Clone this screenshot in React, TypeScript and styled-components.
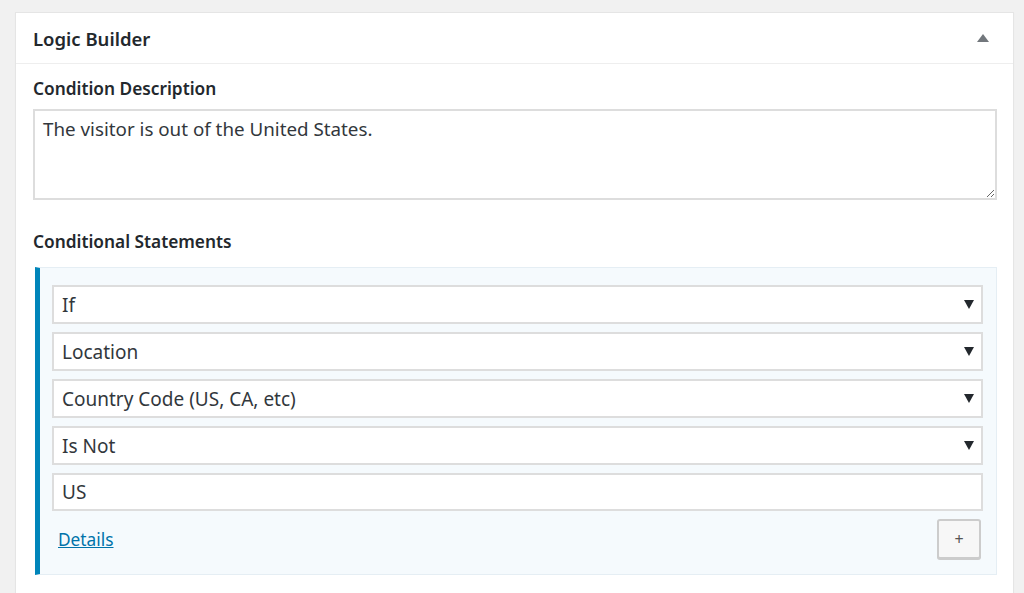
import styled, { createGlobalStyle } from 'styled-components';

const GlobalStyle = createGlobalStyle`
    html, body {
        margin: 0;
        padding: 0;
        background: #f1f1f1;
        font-family: "Noto Sans", "Open Sans", sans-serif;
        color: #23282d;
    }
`;

const Page = styled.div`
    padding: 12px 10px 0 15px;
    height: 593px;
    box-sizing: border-box;
    overflow: hidden;
`;

const Card = styled.div`
    background: #fff;
    border: 1px solid #e5e5e5;
    box-shadow: 0 1px 1px rgba(0, 0, 0, 0.04);
    min-height: 620px;
`;

const Header = styled.div`
    display: flex;
    align-items: center;
    justify-content: space-between;
    height: 50px;
    padding: 0 24px 0 17px;
    border-bottom: 1px solid #eee;
`;

const Title = styled.h2`
    margin: 0;
    font-size: 18.5px;
    font-weight: 600;
    color: #23282d;
`;

const Toggle = styled.span`
    width: 0;
    height: 0;
    border-left: 6px solid transparent;
    border-right: 6px solid transparent;
    border-bottom: 8px solid #72777c;
`;

const Body = styled.div`
    padding: 13px 16px 0 17px;
`;

const Label = styled.div<{ $gap?: number }>`
    font-size: 17.3px;
    font-weight: 600;
    color: #23282d;
    line-height: 24px;
    margin-bottom: ${({ $gap }) => $gap ?? 8}px;
`;

const TextArea = styled.textarea`
    display: block;
    width: 100%;
    height: 91px;
    box-sizing: border-box;
    border: 2px solid #ddd;
    padding: 5px 8px;
    font-family: "Noto Sans", "Open Sans", sans-serif;
    font-size: 18.8px;
    color: #32373c;
    resize: vertical;
    margin-bottom: 30px;
    outline: none;
`;

const Statement = styled.div`
    margin-left: 2px;
    background: #f5fafd;
    border: 1px solid #e5eef4;
    border-left: 5px solid #0085ba;
    padding: 17px 13px 15px 12px;
    display: flex;
    flex-direction: column;
    gap: 8px;
`;

const Field = styled.div<{ $input?: boolean }>`
    display: flex;
    align-items: center;
    justify-content: space-between;
    height: ${({ $input }) => ($input ? 38 : 39)}px;
    box-sizing: border-box;
    background: #fff;
    border: 2px solid #ddd;
    padding: 0 7px 0 8px;
    font-size: 19px;
    color: #32373c;
`;

const Arrow = styled.span`
    width: 0;
    height: 0;
    border-left: 5px solid transparent;
    border-right: 5px solid transparent;
    border-top: 9px solid #23282d;
`;

const Footer = styled.div`
    display: flex;
    align-items: center;
    justify-content: space-between;
    padding: 0 2px 0 6px;
`;

const DetailsLink = styled.a`
    color: #0073aa;
    text-decoration: underline;
    font-size: 17.3px;
`;

const AddButton = styled.button`
    width: 44px;
    height: 40px;
    border: 2px solid #ccc;
    border-radius: 3px;
    background: #f7f7f7;
    box-shadow: 0 1px 0 #ccc;
    font-size: 16px;
    color: #555;
    font-family: "Noto Sans", sans-serif;
`;

const selects = ['If', 'Location', 'Country Code (US, CA, etc)', 'Is Not'];

export default function App() {
    return (
        <Page>
            <GlobalStyle />
            <Card>
                <Header>
                    <Title>Logic Builder</Title>
                    <Toggle />
                </Header>
                <Body>
                    <Label>Condition Description</Label>
                    <TextArea defaultValue="The visitor is out of the United States." />
                    <Label $gap={13}>Conditional Statements</Label>
                    <Statement>
                        {selects.map((s) => (
                            <Field key={s}>
                                {s}
                                <Arrow />
                            </Field>
                        ))}
                        <Field $input>US</Field>
                        <Footer>
                            <DetailsLink href="#">Details</DetailsLink>
                            <AddButton>+</AddButton>
                        </Footer>
                    </Statement>
                </Body>
            </Card>
        </Page>
    );
}
